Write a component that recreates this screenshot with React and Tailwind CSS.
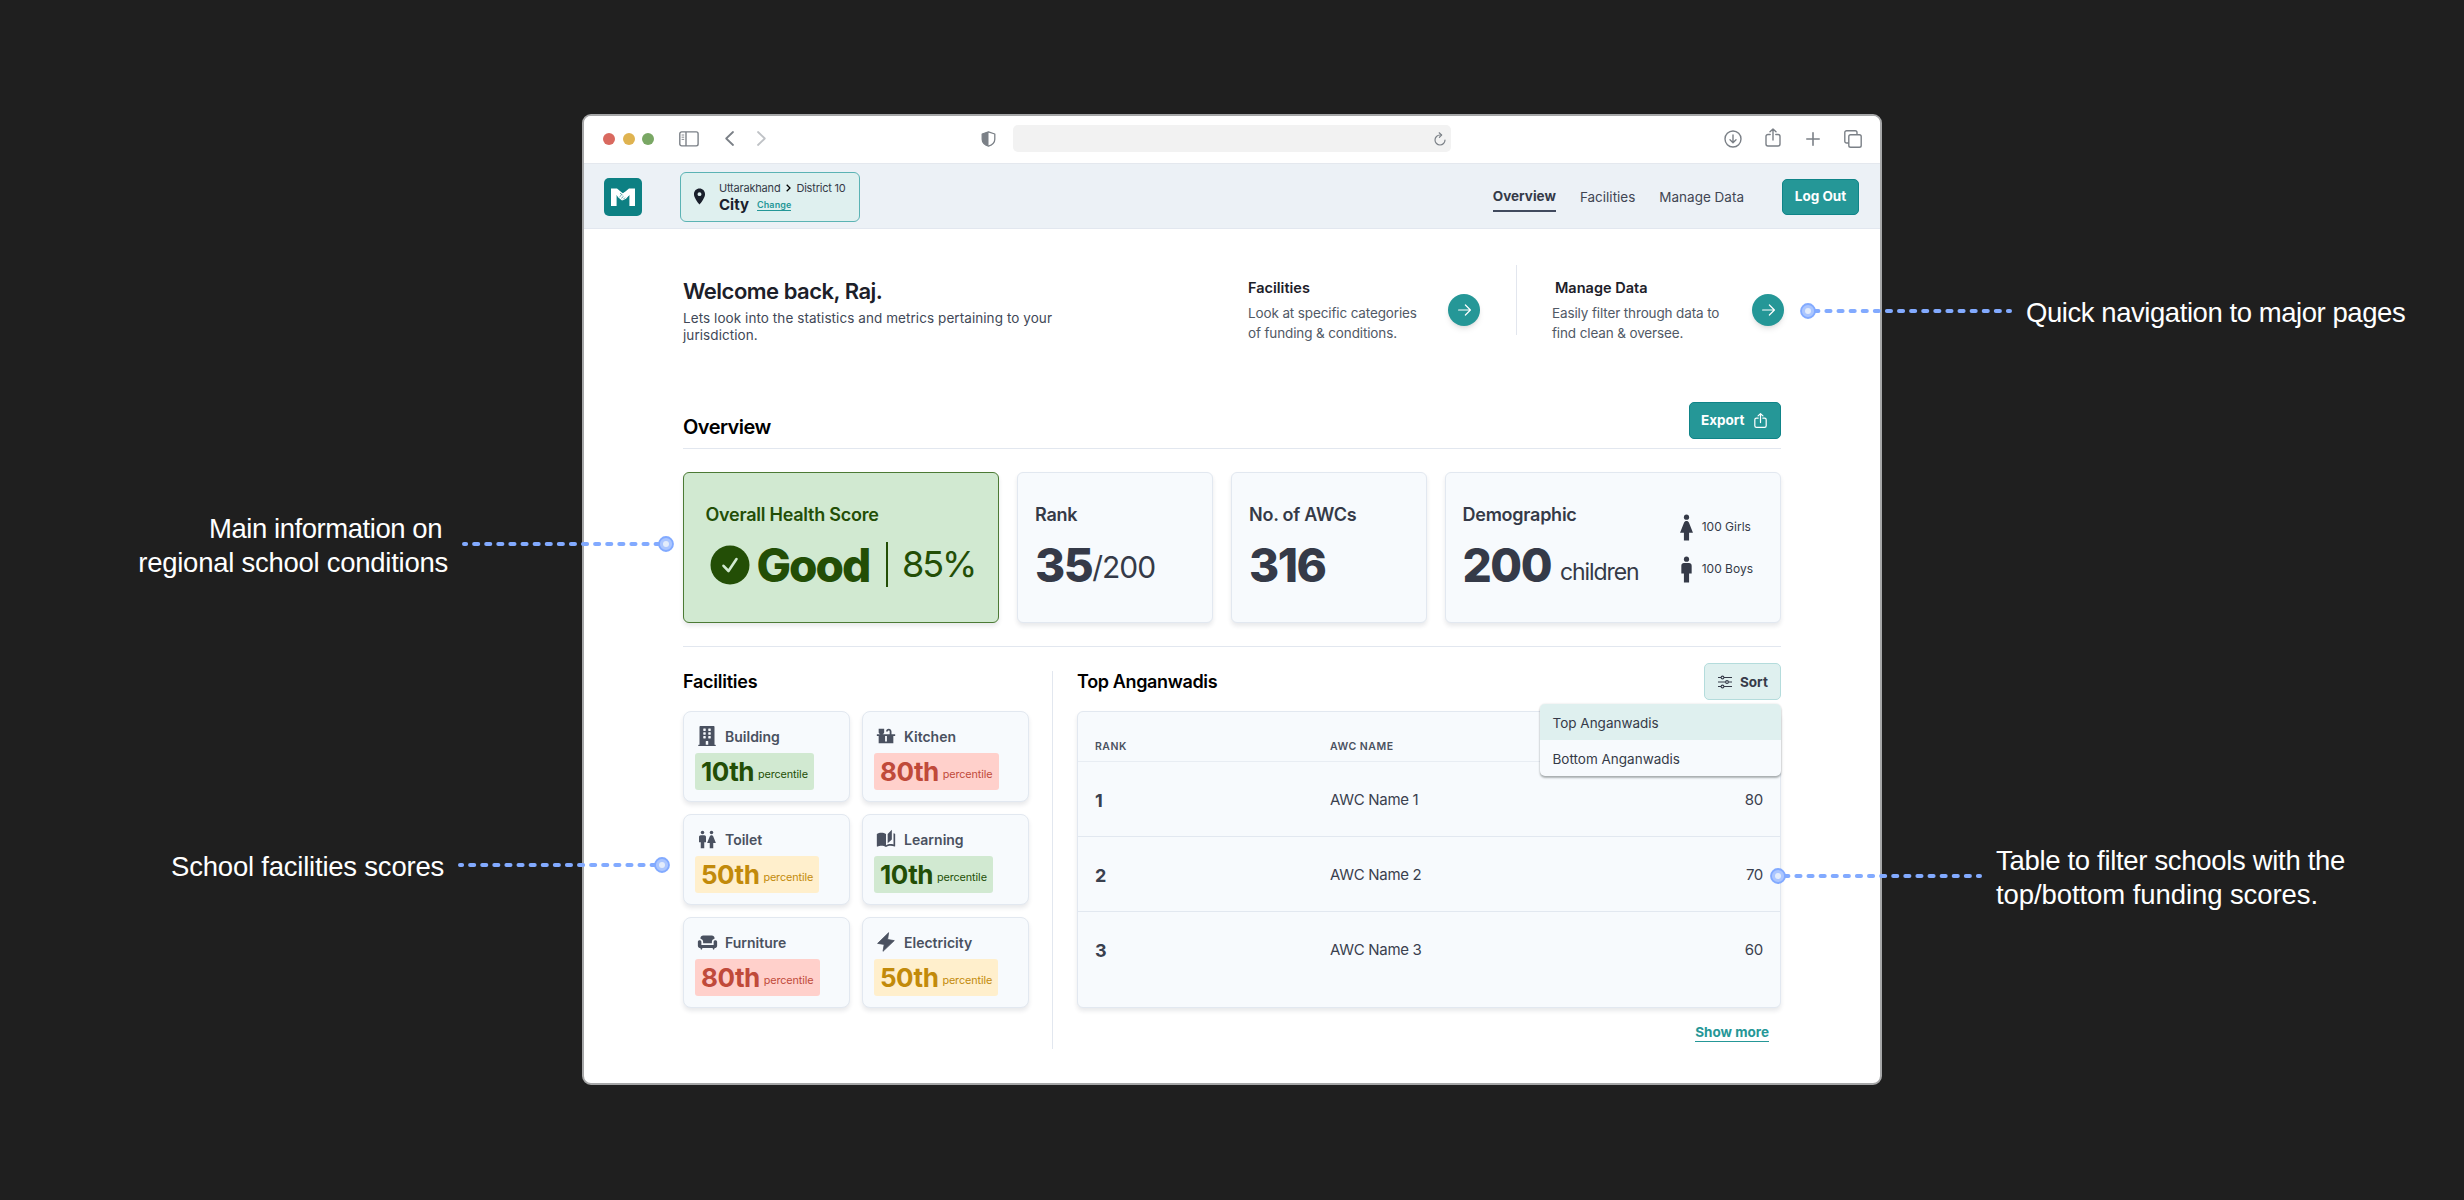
import React from 'react';
import { MdAutoStories, MdChair, MdCountertops, MdLocationOn, MdMan, MdWoman } from 'react-icons/md';
import { FaBuilding } from 'react-icons/fa';

const TONES = {
  good: 'bg-[#d1e9d1] text-[#234e06]',
  average: 'bg-[#ffefcc] text-[#c28a0a]',
  poor: 'bg-[#ffd0cb] text-[#c04a3a]',
};

const facilities = [
  { name: 'Building', score: '10th', tone: 'good', icon: <FaBuilding className="h-5 w-[18px]" /> },
  { name: 'Kitchen', score: '80th', tone: 'poor', icon: <MdCountertops className="size-[22px] shrink-0" /> },
  { name: 'Toilet', score: '50th', tone: 'average', icon: <ToiletIcon /> },
  { name: 'Learning', score: '10th', tone: 'good', icon: <MdAutoStories className="size-5 shrink-0" /> },
  { name: 'Furniture', score: '80th', tone: 'poor', icon: <MdChair className="h-[19px] w-[21px] shrink-0" preserveAspectRatio="none" /> },
  { name: 'Electricity', score: '50th', tone: 'average', icon: <BoltIcon /> },
];

const rows = [
  { rank: 1, name: 'AWC Name 1', score: 80 },
  { rank: 2, name: 'AWC Name 2', score: 70 },
  { rank: 3, name: 'AWC Name 3', score: 60 },
];

function ToiletIcon() {
  return (
    <span className="flex items-center">
      <MdMan className="size-[21px] shrink-0" />
      <MdWoman className="size-[21px] shrink-0 -ml-[12.5px]" />
    </span>
  );
}

function BoltIcon() {
  return (
    <svg className="h-5 w-[18px]" viewBox="0 0 18 20" fill="currentColor" stroke="currentColor" strokeLinejoin="round">
      <path d="M11.6 0.7 L0.6 11.4 L7.2 12.4 L6 19.3 L17.3 8.6 L10.6 7.5 Z" strokeWidth="0.8" />
    </svg>
  );
}

function ShareIcon({ className, strokeWidth = 1.5 }) {
  return (
    <svg className={className} viewBox="0 0 16 19" fill="none" stroke="currentColor" strokeWidth={strokeWidth} strokeLinecap="round" strokeLinejoin="round">
      <path d="M5.2 6.5H3A2 2 0 0 0 1 8.500V16a2 2 0 0 0 2 2h10a2 2 0 0 0 2-2V8.500a2 2 0 0 0-2-2h-2.200M8 12V1M5 3.800 8 1l3 2.800" />
    </svg>
  );
}

function Logo() {
  return (
    <svg className="size-[38px] shrink-0" viewBox="0 0 38 38">
      <rect width="38" height="38" rx="5" fill="#0d8083" />
      <path d="M7 10.500h6l6 5 6-5h6v17.500h-5.600V17l-6.400 5.200L12.600 17v11H7Z" fill="#fff" />
      <path d="M12.500 16.500 15 15l3 .5 3.500-1.500 4 2.800-3.500 4-4 1.600-4-3.200Z" fill="#fff" />
      <path d="M15.500 18.800 17.500 17M17.300 20.300 19.500 18.300M19.300 21.300 21 19.600M16 15.200 18.500 17" stroke="#0d8083" strokeWidth="0.7" fill="none" />
    </svg>
  );
}

function BrowserBar() {
  return (
    <div className="flex h-12 shrink-0 items-center border-b border-[#e4e8ee] bg-white pb-[2px] pl-[19px] pr-[18px] text-[#7b8087]">
      <div className="flex gap-[7.500px]">
        <span className="size-3 rounded-full bg-[#d9695f]" />
        <span className="size-3 rounded-full bg-[#dfb350]" />
        <span className="size-3 rounded-full bg-[#79a764]" />
      </div>
      <svg className="ml-[24.500px] h-4 w-5" viewBox="0 0 20 16" fill="none" stroke="currentColor" strokeWidth="1.4">
        <rect x="0.8" y="0.9" width="18.300" height="14" rx="1.800" />
        <path d="M7 1v14" />
        <path d="M2.600 4h2.600M2.600 6.200h2.600M2.600 8.400h2.600" strokeWidth="0.9" />
      </svg>
      <svg className="ml-[26.500px] h-[15px] w-[9px]" viewBox="0 0 9 15" fill="none" stroke="currentColor" strokeWidth="1.8" strokeLinecap="round" strokeLinejoin="round">
        <path d="M8 1 1.200 7.500 8 14" />
      </svg>
      <svg className="ml-[23px] h-[15px] w-[9px] text-[#bfc2c6]" viewBox="0 0 9 15" fill="none" stroke="currentColor" strokeWidth="1.8" strokeLinecap="round" strokeLinejoin="round">
        <path d="M1 1 7.800 7.500 1 14" />
      </svg>
      <svg className="ml-[214.500px] h-4 w-[15px]" viewBox="0 0 15 16">
        <path d="M7.500.8 13.800 3v5.200c0 3.400-2.600 5.600-6.300 7-3.700-1.400-6.300-3.600-6.300-7V3Z" fill="none" stroke="#7b8087" strokeWidth="1.300" strokeLinejoin="round" />
        <path d="M7.500.8V15.200c-3.700-1.400-6.300-3.600-6.300-7V3Z" fill="#7b8087" />
      </svg>
      <div className="ml-[17.500px] flex h-[27px] w-[438px] items-center justify-end rounded-[5px] bg-[#f2f2f2] pr-[5px]">
        <svg className="h-[14px] w-3" viewBox="0 0 12 14" fill="none" stroke="currentColor" strokeWidth="1.200" strokeLinecap="round">
          <path d="M7.500 3H6a5 5 0 1 0 5 5" />
          <path d="M5.200.8 7.600 3 5.400 5.300" />
        </svg>
      </div>
      <div className="ml-auto flex items-center">
        <svg className="h-[18px] w-[18px]" viewBox="0 0 18 18" fill="none" stroke="currentColor" strokeWidth="1.400" strokeLinecap="round" strokeLinejoin="round">
          <circle cx="9" cy="9" r="8" />
          <path d="M9 5v7.500M6 9.800l3 2.900 3-2.900" />
        </svg>
        <ShareIcon className="mb-0.5 ml-[23px] h-[19px] w-4" strokeWidth={1.4} />
        <svg className="ml-[25px] size-[14px]" viewBox="0 0 14 14" stroke="currentColor" strokeWidth="1.600" strokeLinecap="round">
          <path d="M7 .8v12.400M.8 7h12.400" />
        </svg>
        <svg className="ml-[24px] size-[18px]" viewBox="0 0 18 18" fill="none" stroke="currentColor" strokeWidth="1.400">
          <rect x="4.800" y="4.800" width="12.400" height="12.400" rx="1.800" />
          <path d="M4.800 13H2.600A1.800 1.800 0 0 1 .8 11.200V2.600A1.800 1.800 0 0 1 2.600.8h8.600A1.800 1.800 0 0 1 13 2.600v2.200" />
        </svg>
      </div>
    </div>
  );
}

function NavBar() {
  return (
    <header className="flex h-[65px] shrink-0 items-center border-b border-[#e2e7ef] bg-[#ecf1f6] pl-5 pr-[21px] pt-px">
      <Logo />
      <div className="ml-[38px] flex h-[50px] w-[180px] items-center rounded-[6px] border border-[#5bb3b4] bg-[#dff0ef] pl-[9px] text-[#1a202c]">
        <MdLocationOn className="size-[19px] shrink-0" />
        <div className="ml-[10px] flex flex-col pt-[2px]">
          <div className="flex items-center gap-[5.500px] text-[11px] leading-[14px] tracking-[-0.200px] text-[#353a48]">
            <span>Uttarakhand</span>
            <svg className="h-2 w-[5px] text-black" viewBox="0 0 5 8" fill="none" stroke="currentColor" strokeWidth="1.300">
              <path d="M.7.700 4 4 .7 7.300" />
            </svg>
            <span>District 10</span>
          </div>
          <div className="mt-[1px] flex items-center gap-2 leading-[18px]">
            <span className="text-[15px] font-bold">City</span>
            <a href="#" className="mt-px border-b border-[#259797] text-[9px] font-semibold leading-[10px] tracking-[0.1px] text-[#259797]">Change</a>
          </div>
        </div>
      </div>
      <nav className="ml-auto flex items-center pt-px text-[13.500px] text-[#414653]">
        <a href="#" className="mt-1 border-b-2 border-[#414a5e] pb-[4px] font-bold leading-[20px] text-[#353a48]">Overview</a>
        <a href="#" className="ml-[24px] leading-5">Facilities</a>
        <a href="#" className="ml-[24px] leading-5">Manage Data</a>
      </nav>
      <button className="ml-[38px] h-9 w-[77px] rounded-[5px] border border-[#0f8488] bg-[#259797] text-[13.500px] font-bold text-white">Log Out</button>
    </header>
  );
}

function QuickLink({ title, titleClass, children }) {
  return (
    <div className="flex">
      <div className="w-[168px] pt-[12.500px]">
        <h3 className={`text-[14.500px] font-semibold leading-5 text-[#1c2029] ${titleClass}`}>{title}</h3>
        <p className="mt-[6.500px] whitespace-nowrap text-[13.500px] leading-[19.500px] tracking-[-0.130px] text-[#515966]">{children}</p>
      </div>
      <button className="ml-8 mt-[29px] flex size-8 items-center justify-center rounded-full bg-[#259797] text-white shadow-md">
        <svg className="h-3 w-[13px]" viewBox="0 0 13 12" fill="none" stroke="currentColor" strokeWidth="1.200" strokeLinecap="round" strokeLinejoin="round">
          <path d="M.6 6h11.800M7.400 1l5 5-5 5" />
        </svg>
      </button>
    </div>
  );
}

function Welcome() {
  return (
    <section className="flex h-[173px] justify-between">
      <div className="pt-[47.500px]">
        <h1 className="text-[22px] font-semibold leading-7 tracking-[-0.500px] text-[#1c2029]">Welcome back, Raj.</h1>
        <p className="mt-[5.500px] w-[385px] text-[13.500px] leading-[16.500px] tracking-[0.070px] text-[#414857]">
          Lets look into the statistics and metrics pertaining to your jurisdiction.
        </p>
      </div>
      <div className="-mr-[3px] flex pt-9">
        <QuickLink title="Facilities" titleClass="">
          Look at specific categories<br />of funding &amp; conditions.
        </QuickLink>
        <div className="ml-[36px] mr-[35px] h-[70px] w-px bg-[#e2e6ee]" />
        <QuickLink title="Manage Data" titleClass="pl-[3px]">
          Easily filter through data to<br />find clean &amp; oversee.
        </QuickLink>
      </div>
    </section>
  );
}

function StatCard({ className, title, aside, children }) {
  return (
    <div className={`flex h-[151px] rounded-[6px] border shadow-[0_3px_4px_rgba(30,40,60,0.1)] ${className}`}>
      <div className="pt-[30px]">
        <h3 className="text-[18px] font-semibold leading-6 tracking-[-0.250px]">{title}</h3>
        <div className="mt-[15px] flex h-[46px]">{children}</div>
      </div>
      {aside}
    </div>
  );
}

function Overview() {
  const neutral = 'border-[#e2e8f0] bg-[#f7fafd] text-[#353a48]';
  const children = (
    <div className="ml-auto flex flex-col gap-[11px] pr-[27px] pt-[38.500px] text-[12px]">
      <div className="flex items-center">
        <MdWoman className="size-[31px]" />
        <span>100 Girls</span>
      </div>
      <div className="flex items-center">
        <MdMan className="size-[31px]" />
        <span>100 Boys</span>
      </div>
    </div>
  );

  return (
    <section>
      <div className="flex h-[47px] items-start justify-between border-b border-[#e2e7ef]">
        <h2 className="pt-[11px] text-[20px] font-semibold leading-7 tracking-[-0.550px] text-black">Overview</h2>
        <button className="flex h-[37px] w-[92px] items-center rounded-[5px] border border-[#0f8488] bg-[#259797] pl-[11px] text-[13.500px] font-bold text-white">
          Export
          <ShareIcon className="ml-[9px] h-[17px] w-[13px]" strokeWidth={1.5} />
        </button>
      </div>
      <div className="mt-[23px] flex gap-[18px]">
        <StatCard title="Overall Health Score" className="w-[316px] border-[#4c7a35] bg-[#d1e9d1] pl-[21.500px] text-[#234e06]">
          <svg className="ml-[4px] mt-[3px] size-10 shrink-0" viewBox="0 0 40 40">
            <circle cx="20" cy="20" r="19.500" fill="#234e06" />
            <path d="M13.500 20.800l5 5.200 8-12" fill="none" stroke="#d1e9d1" strokeWidth="2.600" strokeLinecap="round" strokeLinejoin="round" />
          </svg>
          <span className="ml-[7px] text-[46px] font-extrabold leading-[46px] tracking-[-2px]">Good</span>
          <span className="ml-[17px] h-[45px] w-[1.500px] bg-[#234e06]" />
          <span className="ml-[14px] text-[36px] leading-[44px] tracking-[-2px]">85%</span>
        </StatCard>
        <StatCard title="Rank" className={`w-[196px] pl-[17px] ${neutral}`}>
          <span className="text-[46px] font-extrabold leading-[46px] tracking-[-1.500px]">35</span>
          <span className="text-[30px] leading-[51px] tracking-[-1px]">/200</span>
        </StatCard>
        <StatCard title="No. of AWCs" className={`w-[196px] pl-[17px] ${neutral}`}>
          <span className="text-[46px] font-extrabold leading-[46px] tracking-[-1.500px]">316</span>
        </StatCard>
        <StatCard title="Demographic" aside={children} className={`flex-1 pl-[16.500px] ${neutral}`}>
          <span className="text-[46px] font-extrabold leading-[46px] tracking-[-1.500px]">200</span>
          <span className="ml-[9px] text-[23px] leading-[60px] tracking-[-1.100px]">children</span>
        </StatCard>
      </div>
    </section>
  );
}

function FacilityCard({ name, score, tone, icon }) {
  return (
    <div className="h-[91px] rounded-[8px] border border-[#e2e8f0] bg-[#f7fafd] pl-[11px] shadow-[0_3px_4px_rgba(30,40,60,0.1)]">
      <div className="mt-[12px] flex h-[24px] items-center text-[#4a5160]">
        <div className="flex w-[24px] items-center justify-center">{icon}</div>
        <h3 className="ml-[6px] text-[14px] font-semibold">{name}</h3>
      </div>
      <div className={`mt-[5px] inline-flex h-[37px] rounded-[3px] px-[6px] ${TONES[tone]}`}>
        <span className="text-[26px] font-bold leading-[37px] tracking-[-0.500px]">{score}</span>
        <span className="ml-[4px] text-[10.800px] leading-[43px] tracking-[-0.080px]">percentile</span>
      </div>
    </div>
  );
}

function Facilities() {
  return (
    <section className="w-[346px] pt-[21px]">
      <h2 className="text-[18px] font-semibold leading-7 tracking-[-0.250px] text-black">Facilities</h2>
      <div className="mt-[15px] grid grid-cols-2 gap-3">
        {facilities.map(item => (
          <FacilityCard key={item.name} {...item} />
        ))}
      </div>
    </section>
  );
}

function TopAnganwadis() {
  return (
    <section className="ml-[24px] flex-1">
      <div className="flex h-[64px] justify-between">
        <h2 className="pt-[21px] text-[18px] font-semibold leading-7 tracking-[-0.350px] text-black">Top Anganwadis</h2>
        <div className="relative mt-4 h-[37px]">
          <button className="flex h-[37px] w-[77px] items-center rounded-[5px] border border-[#b4dcdc] bg-[#dff0ef] pl-[13px] pt-px text-[13.500px] font-bold text-[#353a48]">
            <svg className="mr-[8px] h-[14px] w-[14px]" viewBox="0 0 14 14" fill="none" stroke="currentColor" strokeWidth="1.100">
              <path d="M0 2.500h3M6 2.500h8M0 7h7.500M10.500 7H14M0 11.500h3M6 11.500h8" />
              <circle cx="4.500" cy="2.500" r="1.400" />
              <circle cx="9" cy="7" r="1.400" />
              <circle cx="4.500" cy="11.500" r="1.400" />
            </svg>
            Sort
          </button>
          {/* Sort menu, open */}
          <ul className="absolute right-0 top-[41px] w-[241px] overflow-hidden rounded-[5px] bg-[#f7fafd] text-[13.500px] leading-9 text-[#353a48] shadow-[0_2px_2px_rgba(40,50,50,0.35),0_0_2px_rgba(0,0,0,0.15)]">
            <li className="h-9 bg-[#dff0ef] pl-[12.500px] pt-[0.500px]">Top Anganwadis</li>
            <li className="h-9 pl-[12.500px] pt-[0.500px]">Bottom Anganwadis</li>
          </ul>
        </div>
      </div>
      <div className="h-[297px] rounded-[6px] border border-[#e2e8f0] bg-[#f7fafd] shadow-[0_3px_4px_rgba(30,40,60,0.1)]">
        <div className="flex h-[50px] border-b border-[#e8edf3] pl-[17px] pt-[27px] text-[10.500px] font-semibold leading-4 tracking-[0.500px] text-[#4a5160]">
          <span className="w-[235px]">RANK</span>
          <span>AWC NAME</span>
        </div>
        <div className="divide-y divide-[#e2e8f0] text-[#3a404e]">
          {rows.map(row => (
            <div key={row.rank} className="flex h-[75px] items-center pl-[17px] pr-[17px] pt-[2px]">
              <span className="w-[235px] text-[18px] font-bold">{row.rank}</span>
              <span className="text-[15px] tracking-[-0.300px]">{row.name}</span>
              <span className="ml-auto text-[15px] tracking-[-0.300px]">{row.score}</span>
            </div>
          ))}
        </div>
      </div>
      <div className="mt-[16px] flex justify-end pr-[12px]">
        <a href="#" className="border-b border-[#259797] text-[13.500px] font-bold leading-[17px] text-[#259797]">Show more</a>
      </div>
    </section>
  );
}

// Dashed pointer with a glowing dot on the end that touches the interface
function Pointer({ className, width, dotSide }) {
  const dotX = dotSide === 'left' ? 8 : width - 8;
  const from = dotSide === 'left' ? width - 2 : 2;
  return (
    <svg className={`absolute ${className}`} width={width} height="16" viewBox={`0 0 ${width} 16`}>
      <path d={`M${from} 8H${dotX}`} stroke="#82aaff" strokeWidth="4" strokeDasharray="4.100 8" strokeDashoffset="2" strokeLinecap="round" />
      <circle cx={dotX} cy="8" r="7" fill="#abc6ff" stroke="#82aaff" strokeWidth="1.800" />
      <circle cx={dotX} cy="8" r="3" fill="#e3ecfb" />
    </svg>
  );
}

const noteText = "absolute whitespace-nowrap font-['Liberation_Sans',sans-serif] text-[27.500px] leading-[34px] text-white";

function Annotations() {
  return (
    <>
      <p className={`${noteText} right-[2016px] top-[512px] text-right tracking-[-0.260px]`}>
        <span className="pr-[6px] tracking-[-0.450px]">Main information on</span><br />regional school conditions
      </p>
      <Pointer className="left-[462px] top-[536px]" width={212} dotSide="right" />

      <p className={`${noteText} right-[2020px] top-[850px] text-right tracking-[-0.220px]`}>School facilities scores</p>
      <Pointer className="left-[458px] top-[857px]" width={212} dotSide="right" />

      <Pointer className="left-[1800px] top-[303px]" width={212} dotSide="left" />
      <p className={`${noteText} left-[2026px] top-[296px] tracking-[-0.440px]`}>Quick navigation to major pages</p>

      <Pointer className="left-[1770px] top-[868px]" width={212} dotSide="left" />
      <p className={`${noteText} left-[1996px] top-[844px] tracking-[-0.320px]`}>
        Table to filter schools with the<br /><span className="tracking-[-0.080px]">top/bottom funding scores.</span>
      </p>
    </>
  );
}

export default function App() {
  return (
    <div className="relative h-[1200px] w-[2464px] overflow-hidden bg-[#1f1f1f] pt-[114px] font-['Inter',sans-serif]">
      <div className="mx-auto flex h-[971px] w-[1300px] flex-col overflow-hidden rounded-[9px] border-2 border-[#a6a7a8] bg-white">
        <BrowserBar />
        <NavBar />
        <main className="px-[99px]">
          <Welcome />
          <Overview />
          <div className="mt-[23px] flex border-t border-[#e2e7ef]">
            <Facilities />
            <div className="ml-[23px] mt-6 h-[378px] w-px bg-[#e2e7ef]" />
            <TopAnganwadis />
          </div>
        </main>
      </div>
      <Annotations />
    </div>
  );
}
